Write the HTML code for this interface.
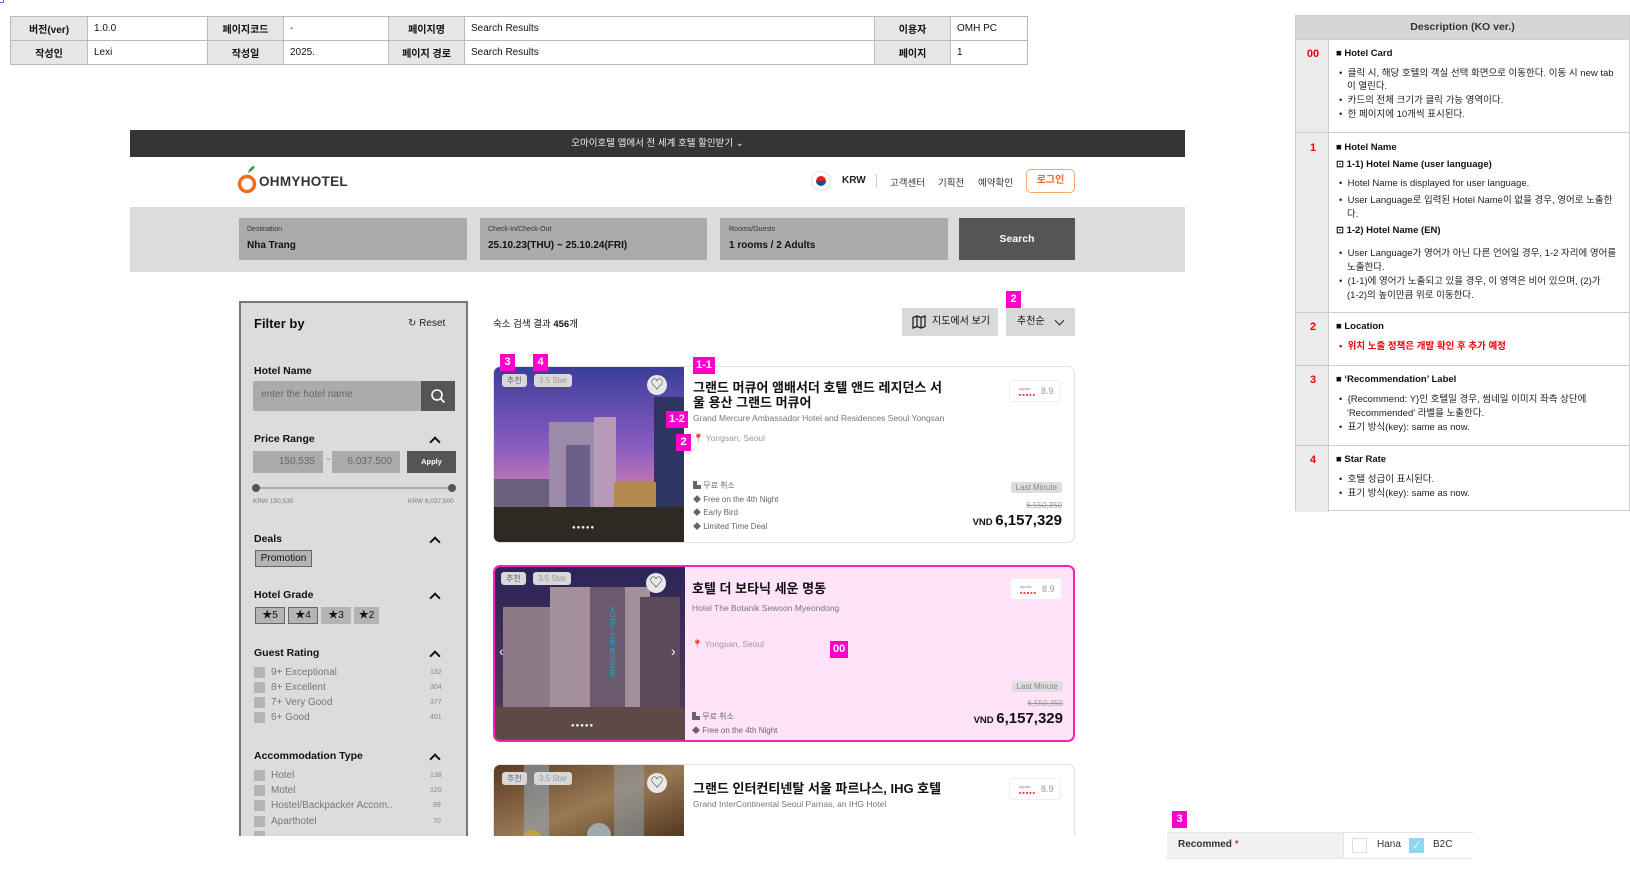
<!DOCTYPE html>
<html><head><meta charset="utf-8">
<style>
*{margin:0;padding:0;box-sizing:border-box}
body{width:1630px;height:873px;overflow:hidden;background:#fff;font-family:"Liberation Sans","Noto Sans CJK KR",sans-serif;color:#111;position:relative}
.a{position:absolute;white-space:nowrap}
.tg{position:absolute;background:#f0c;color:#fff;font-weight:bold;font-size:11px;line-height:17px;text-align:center;padding:0 3px;min-width:15px}
table.meta{position:absolute;left:10px;top:16px;border-collapse:collapse;font-size:10px}
table.meta td{border:1px solid #bbb;height:24px;padding:0 6px}
table.meta td.h{background:#e6e6e6;font-weight:bold;text-align:center}
.sb{position:absolute;left:239px;top:301px;width:229px;height:535px;background:#dcdcdc;border:2px solid #777;border-bottom:none;overflow:hidden}
.sb .a{font-size:10px}
.lab{font-weight:bold;font-size:10.5px!important;color:#111}
.chev{position:absolute;width:8px;height:8px;border-left:2px solid #111;border-top:2px solid #111;transform:rotate(45deg)}
.cb{position:absolute;width:11px;height:11px;background:#b4b4b4}
.it{color:#777;font-size:10px!important}
.ct{color:#888;font-size:7px!important}
.card{position:absolute;left:493px;width:582px;border:1px solid #e2e2e2;border-radius:7px;background:#fff;overflow:hidden}
.img{position:absolute;left:0;top:0;width:190px;bottom:0}
.pill{position:absolute;font-size:8px;line-height:13px;padding:0 5px;border-radius:3px}
.heart{position:absolute;width:20px;height:20px;border-radius:50%;background:#e8e8e8;text-align:center;font-size:13px;line-height:20px;color:#333}
.ag{position:absolute;right:13px;top:13px;width:52px;height:22px;border:1px solid #eee;border-radius:3px;background:#fff}
.desc{position:absolute;left:1295px;top:15px;width:335px;height:496px;border:1px solid #ccc;font-size:9.5px}
.dr{position:absolute;left:0;width:335px;border-top:1px solid #ccc}
.num{position:absolute;left:0;width:34px;text-align:center;color:#e00;font-weight:bold;font-size:11px}
.dt{position:absolute;left:43px;white-space:nowrap;color:#222}
.c2{left:51px}
.bh{font-weight:bold;color:#111}
</style></head><body>

<div class="a" style="left:0;top:0;width:4px;height:3px;border:1px solid #3a7bd5;border-top:none;border-left:none"></div>

<table class="meta">
<tr><td class="h" style="width:77px">버전(ver)</td><td style="width:120px">1.0.0</td><td class="h" style="width:76px">페이지코드</td><td style="width:105px">-</td><td class="h" style="width:76px">페이지명</td><td style="width:410px">Search Results</td><td class="h" style="width:76px">이용자</td><td style="width:77px">OMH PC</td></tr>
<tr><td class="h">작성인</td><td>Lexi</td><td class="h">작성일</td><td>2025.</td><td class="h">페이지 경로</td><td>Search Results</td><td class="h">페이지</td><td>1</td></tr>
</table>

<div class="a" style="left:130px;top:130px;width:1055px;height:27px;background:#353535;color:#eee;font-size:9.5px;text-align:center;line-height:27px">오마이호텔 앱에서 전 세계 호텔 할인받기 ⌄</div>

<svg class="a" style="left:236px;top:165px" width="24" height="30" viewBox="0 0 24 30"><path d="M12 8 C13 3 16 1 19 1 C18 4 16 6 12 8Z" fill="#3aa047"/><circle cx="11" cy="19" r="7.5" fill="none" stroke="#f26b21" stroke-width="3.5"/></svg>
<div class="a" style="left:259px;top:174px;font-size:13.5px;font-weight:bold;letter-spacing:0.3px;color:#333">OHMYHOTEL</div>
<div class="a" style="left:812px;top:172px;width:18px;height:18px;border-radius:50%;background:#fff;box-shadow:0 0 2px #aaa"></div>
<div class="a" style="left:816px;top:176px;width:10px;height:10px;border-radius:50%;background:linear-gradient(#d22 50%,#1a4aa0 50%)"></div>
<div class="a" style="left:842px;top:175px;font-size:10px;font-weight:bold;color:#222">KRW</div>
<div class="a" style="left:876px;top:174px;width:1px;height:13px;background:#ccc"></div>
<div class="a" style="left:890px;top:175px;font-size:9.5px;color:#333">고객센터</div>
<div class="a" style="left:938px;top:175px;font-size:9.5px;color:#333">기획전</div>
<div class="a" style="left:978px;top:175px;font-size:9.5px;color:#333">예약확인</div>
<div class="a" style="left:1026px;top:169px;width:49px;height:24px;border:1.5px solid #f7a66f;border-radius:5px;color:#f26b21;font-size:10px;font-weight:bold;text-align:center;line-height:21px">로그인</div>

<div class="a" style="left:130px;top:207px;width:1055px;height:65px;background:#dcdcdc"></div>
<div class="a" style="left:239px;top:218px;width:228px;height:42px;background:#ababab"></div>
<div class="a" style="left:480px;top:218px;width:227px;height:42px;background:#ababab"></div>
<div class="a" style="left:720px;top:218px;width:228px;height:42px;background:#ababab"></div>
<div class="a" style="left:959px;top:218px;width:116px;height:42px;background:#555;color:#fff;font-size:10.5px;font-weight:bold;text-align:center;line-height:42px">Search</div>
<div class="a" style="left:247px;top:226px;font-size:7px;color:#333">Destination</div>
<div class="a" style="left:247px;top:240px;font-size:10px;font-weight:bold">Nha Trang</div>
<div class="a" style="left:488px;top:226px;font-size:7px;color:#333">Check-In/Check-Out</div>
<div class="a" style="left:488px;top:240px;font-size:10px;font-weight:bold">25.10.23(THU) ~ 25.10.24(FRI)</div>
<div class="a" style="left:729px;top:226px;font-size:7px;color:#333">Rooms/Guests</div>
<div class="a" style="left:729px;top:240px;font-size:10px;font-weight:bold">1 rooms / 2 Adults</div>

<div class="sb">
<div class="a" style="left:13px;top:13px;font-size:13px;font-weight:bold">Filter by</div>
<div class="a" style="left:167px;top:15px;font-size:10px;color:#222">↻ Reset</div>
<div class="a lab" style="left:13px;top:62px">Hotel Name</div>
<div class="a" style="left:12px;top:78px;width:168px;height:30px;background:#ababab"></div>
<div class="a" style="left:20px;top:86px;color:#666">enter the hotel name</div>
<div class="a" style="left:180px;top:78px;width:34px;height:30px;background:#555"></div>
<svg class="a" style="left:189px;top:85px" width="16" height="16" viewBox="0 0 16 16"><circle cx="7" cy="7" r="5" fill="none" stroke="#fff" stroke-width="1.6"/><path d="M11 11l3.5 3.5" stroke="#fff" stroke-width="1.6"/></svg>
<div class="a lab" style="left:13px;top:130px">Price Range</div>
<div class="chev" style="left:190px;top:135px"></div>
<div class="a" style="left:12px;top:148px;width:70px;height:22px;background:#ababab;color:#666;text-align:right;padding-right:8px;line-height:22px">150,535</div>
<div class="a" style="left:85px;top:152px;color:#666;font-size:8px">~</div>
<div class="a" style="left:91px;top:148px;width:68px;height:22px;background:#ababab;color:#666;text-align:right;padding-right:8px;line-height:22px">6,037,500</div>
<div class="a" style="left:166px;top:148px;width:49px;height:22px;background:#555;color:#fff;font-size:7.5px;font-weight:bold;text-align:center;line-height:22px">Apply</div>
<div class="a" style="left:15px;top:184px;width:197px;height:2px;background:#aaa"></div>
<div class="a" style="left:11px;top:181px;width:8px;height:8px;border-radius:50%;background:#555"></div>
<div class="a" style="left:207px;top:181px;width:8px;height:8px;border-radius:50%;background:#555"></div>
<div class="a" style="left:12px;top:195px;font-size:6.5px!important;color:#777">KRW 150,535</div>
<div class="a" style="left:167px;top:195px;font-size:6.5px!important;color:#777">KRW 6,037,500</div>
<div class="a lab" style="left:13px;top:230px">Deals</div>
<div class="chev" style="left:190px;top:235px"></div>
<div class="a" style="left:14px;top:247px;width:57px;height:17px;background:#b4b4b4;border:1px solid #666;font-size:10px;text-align:center;line-height:15px">Promotion</div>
<div class="a lab" style="left:13px;top:286px">Hotel Grade</div>
<div class="chev" style="left:190px;top:291px"></div>
<div class="a" style="left:14px;top:304px;width:30px;height:17px;background:#b4b4b4;border:1px solid #666;font-size:10px;text-align:center;line-height:15px">★5</div>
<div class="a" style="left:47px;top:304px;width:30px;height:17px;background:#b4b4b4;border:1px solid #666;font-size:10px;text-align:center;line-height:15px">★4</div>
<div class="a" style="left:80px;top:304px;width:30px;height:17px;background:#b4b4b4;font-size:10px;text-align:center;line-height:17px">★3</div>
<div class="a" style="left:113px;top:304px;width:25px;height:17px;background:#b4b4b4;font-size:10px;text-align:center;line-height:17px">★2</div>
<div class="a lab" style="left:13px;top:344px">Guest Rating</div>
<div class="chev" style="left:190px;top:349px"></div>
<div class="cb" style="left:13px;top:364px"></div><div class="a it" style="left:30px;top:364px">9+ Exceptional</div><div class="a ct" style="left:189px;top:366px">132</div>
<div class="cb" style="left:13px;top:379px"></div><div class="a it" style="left:30px;top:379px">8+ Excellent</div><div class="a ct" style="left:189px;top:381px">304</div>
<div class="cb" style="left:13px;top:394px"></div><div class="a it" style="left:30px;top:394px">7+ Very Good</div><div class="a ct" style="left:189px;top:396px">377</div>
<div class="cb" style="left:13px;top:409px"></div><div class="a it" style="left:30px;top:409px">6+ Good</div><div class="a ct" style="left:189px;top:411px">401</div>
<div class="a lab" style="left:13px;top:447px">Accommodation Type</div>
<div class="chev" style="left:190px;top:452px"></div>
<div class="cb" style="left:13px;top:467px"></div><div class="a it" style="left:30px;top:467px">Hotel</div><div class="a ct" style="left:189px;top:469px">138</div>
<div class="cb" style="left:13px;top:482px"></div><div class="a it" style="left:30px;top:482px">Motel</div><div class="a ct" style="left:189px;top:484px">120</div>
<div class="cb" style="left:13px;top:497px"></div><div class="a it" style="left:30px;top:497px">Hostel/Backpacker Accom..</div><div class="a ct" style="left:192px;top:499px">89</div>
<div class="cb" style="left:13px;top:513px"></div><div class="a it" style="left:30px;top:513px">Aparthotel</div><div class="a ct" style="left:192px;top:515px">70</div>
<div class="cb" style="left:13px;top:528px"></div>
</div>

<div class="a" style="left:493px;top:316px;font-size:9.5px">숙소 검색 결과 <b>456</b>개</div>
<div class="a" style="left:902px;top:308px;width:96px;height:28px;background:#d9d9d9;font-size:10px;line-height:28px;padding-left:30px">지도에서 보기</div>
<svg class="a" style="left:912px;top:315px" width="14" height="14" viewBox="0 0 14 14"><path d="M1 2.5l4-1.5 4 1.5 4-1.5v10.5l-4 1.5-4-1.5-4 1.5z M5 1v10.5 M9 2.5v10.5" fill="none" stroke="#222" stroke-width="1.3"/></svg>
<div class="a" style="left:1006px;top:308px;width:69px;height:28px;background:#d9d9d9;font-size:10px;line-height:28px;padding-left:11px">추천순</div>
<div class="a" style="left:1056px;top:317px;width:7px;height:7px;border-right:1.5px solid #222;border-bottom:1.5px solid #222;transform:rotate(45deg)"></div>
<div class="tg" style="left:1006px;top:291px">2</div>

<div class="card" style="top:366px;height:177px">
<svg class="img" width="190" height="177" viewBox="0 0 190 177" preserveAspectRatio="none">
<defs><linearGradient id="s1" x1="0" y1="0" x2="0" y2="1"><stop offset="0" stop-color="#3a3d9a"/><stop offset=".45" stop-color="#8a5cc0"/><stop offset=".7" stop-color="#c77ab5"/><stop offset="1" stop-color="#3b2d3a"/></linearGradient></defs>
<rect width="190" height="177" fill="url(#s1)"/>
<rect x="55" y="55" width="65" height="85" fill="#9b8aa8"/><rect x="72" y="78" width="24" height="62" fill="#6d5f8c"/>
<rect x="100" y="50" width="22" height="90" fill="#b79ab8"/>
<rect x="160" y="30" width="30" height="120" fill="#2d3560"/>
<rect x="120" y="115" width="42" height="30" fill="#b58a50"/>
<rect x="0" y="112" width="55" height="30" fill="#6a6080"/>
<rect x="0" y="140" width="190" height="37" fill="#2e2a22"/>
</svg>
<div class="pill" style="left:8px;top:7px;background:#d8d8d8;color:#666">추천</div>
<div class="pill" style="left:40px;top:7px;background:#d8d8d8;color:#999">3.5 Star</div>
<div class="heart" style="left:153px;top:8px">♡</div>
<div class="a" style="left:78px;top:158px;color:#fff;font-size:6px;letter-spacing:1px">●●●●●</div>
<div class="a" style="left:199px;top:13px;font-size:13px;font-weight:bold;line-height:15px;white-space:normal;word-break:break-all;width:252px">그랜드 머큐어 앰배서더 호텔 앤드 레지던스 서울 용산 그랜드 머큐어</div>
<div class="a" style="left:199px;top:46px;font-size:8.5px;color:#777">Grand Mercure Ambassador Hotel and Residences Seoul Yongsan</div>
<div class="a" style="left:199px;top:66px;font-size:8.5px;color:#999"><span style="color:#aaa">📍</span> Yongsan, Seoul</div>
<div class="a" style="left:199px;top:112px;font-size:8px;color:#666;line-height:13.5px">▙ 무료 취소<br>◆ Free on the 4th Night<br>◆ Early Bird<br>◆ Limited Time Deal</div>
<div class="ag"><div class="a" style="left:9px;top:5px;font-size:4px;color:#888">agoda</div><div class="a" style="left:9px;top:11px;font-size:4px;color:#e44;letter-spacing:1px">■■■■■</div><div class="a" style="left:31px;top:5px;font-size:9px;color:#999">8.9</div></div>
<div class="a" style="right:12px;top:115px;background:#dedede;color:#888;font-size:8px;padding:1px 5px;border-radius:2px">Last Minute</div>
<div class="a" style="right:12px;top:134px;font-size:8px;color:#999;text-decoration:line-through">6,550,350</div>
<div class="a" style="right:12px;top:145px;font-size:15px;font-weight:bold"><span style="font-size:9.5px">VND </span>6,157,329</div>
</div>
<div class="tg" style="left:500px;top:354px">3</div>
<div class="tg" style="left:533px;top:354px">4</div>
<div class="tg" style="left:693px;top:357px">1-1</div>
<div class="tg" style="left:666px;top:411px">1-2</div>
<div class="tg" style="left:676px;top:434px">2</div>

<div class="card" style="top:565px;height:177px;background:#ffe3f8;border:2px solid #ff1fb9">
<svg class="img" width="190" height="177" viewBox="0 0 190 177" preserveAspectRatio="none">
<defs><linearGradient id="s2" x1="0" y1="0" x2="0" y2="1"><stop offset="0" stop-color="#2c2458"/><stop offset="1" stop-color="#5a3d5a"/></linearGradient></defs>
<rect width="190" height="177" fill="url(#s2)"/>
<rect x="8" y="40" width="55" height="137" fill="#8e7a86"/>
<rect x="55" y="20" width="100" height="157" fill="#a3909a"/>
<rect x="95" y="20" width="35" height="157" fill="#6b5a6e"/>
<rect x="145" y="30" width="40" height="147" fill="#5a4a5a"/>
<text x="115" y="40" fill="#2ac" font-size="7" transform="rotate(90 115 40)">HOTEL THE BOTANIK</text>
<rect x="0" y="140" width="190" height="37" fill="#5d4a46"/>
</svg>
<div class="pill" style="left:6px;top:5px;background:#d8d8d8;color:#666">추천</div>
<div class="pill" style="left:38px;top:5px;background:#d8d8d8;color:#999">3.5 Star</div>
<div class="heart" style="left:151px;top:6px">♡</div>
<div class="a" style="left:4px;top:76px;color:#fff;font-size:14px">‹</div>
<div class="a" style="left:176px;top:76px;color:#fff;font-size:14px">›</div>
<div class="a" style="left:76px;top:156px;color:#fff;font-size:6px;letter-spacing:1px">●●●●●</div>
<div class="a" style="left:197px;top:11px;font-size:13px;font-weight:bold">호텔 더 보타닉 세운 명동</div>
<div class="a" style="left:197px;top:36px;font-size:8.5px;color:#777">Hotel The Botanik Sewoon Myeondong</div>
<div class="a" style="left:197px;top:72px;font-size:8.5px;color:#999"><span style="color:#aaa">📍</span> Yongsan, Seoul</div>
<div class="a" style="left:197px;top:143px;font-size:8px;color:#666;line-height:13.5px">▙ 무료 취소<br>◆ Free on the 4th Night</div>
<div class="ag" style="right:11px;top:11px"><div class="a" style="left:9px;top:5px;font-size:4px;color:#888">agoda</div><div class="a" style="left:9px;top:11px;font-size:4px;color:#e44;letter-spacing:1px">■■■■■</div><div class="a" style="left:31px;top:5px;font-size:9px;color:#999">8.9</div></div>
<div class="a" style="right:10px;top:114px;background:#dedede;color:#888;font-size:8px;padding:1px 5px;border-radius:2px">Last Minute</div>
<div class="a" style="right:10px;top:132px;font-size:8px;color:#999;text-decoration:line-through">6,550,350</div>
<div class="a" style="right:10px;top:143px;font-size:15px;font-weight:bold"><span style="font-size:9.5px">VND </span>6,157,329</div>
</div>
<div class="tg" style="left:830px;top:641px">00</div>

<div class="card" style="top:764px;height:80px;border-bottom:none;border-radius:7px 7px 0 0">
<svg class="img" width="190" height="80" viewBox="0 0 190 80" preserveAspectRatio="none">
<defs><linearGradient id="s3" x1="0" y1="0" x2="1" y2="1"><stop offset="0" stop-color="#5a3a20"/><stop offset=".5" stop-color="#9a7a55"/><stop offset="1" stop-color="#4a3018"/></linearGradient></defs>
<rect width="190" height="80" fill="url(#s3)"/>
<rect x="30" y="0" width="25" height="80" fill="#8fa3b5" opacity=".6"/><rect x="120" y="0" width="30" height="80" fill="#8fa3b5" opacity=".5"/>
<circle cx="38" cy="75" r="10" fill="#c8a040"/><circle cx="105" cy="70" r="12" fill="#a0a8b0"/>
</svg>
<div class="pill" style="left:8px;top:7px;background:#d8d8d8;color:#666">추천</div>
<div class="pill" style="left:40px;top:7px;background:#d8d8d8;color:#999">3.5 Star</div>
<div class="heart" style="left:153px;top:8px">♡</div>
<div class="a" style="left:199px;top:13px;font-size:13px;font-weight:bold">그랜드 인터컨티넨탈 서울 파르나스, IHG 호텔</div>
<div class="a" style="left:199px;top:34px;font-size:8.5px;color:#777">Grand InterContinental Seoul Parnas, an IHG Hotel</div>
<div class="ag"><div class="a" style="left:9px;top:5px;font-size:4px;color:#888">agoda</div><div class="a" style="left:9px;top:11px;font-size:4px;color:#e44;letter-spacing:1px">■■■■■</div><div class="a" style="left:31px;top:5px;font-size:9px;color:#999">8.9</div></div>
</div>
<div class="a" style="left:480px;top:836px;width:620px;height:37px;background:#fff"></div>

<div class="desc">
<div class="a" style="left:0;top:0;width:333px;height:23px;background:#d6d6d6;font-weight:bold;font-size:10.5px;text-align:center;line-height:23px;color:#333">Description (KO ver.)</div>
<div class="a" style="left:0;top:23px;width:33px;height:473px;background:#ececec;border-right:1px solid #ccc"></div>
<div class="dr" style="top:23px"></div>
<div class="dr" style="top:116px"></div>
<div class="dr" style="top:296px"></div>
<div class="dr" style="top:349px"></div>
<div class="dr" style="top:429px"></div>
<div class="num" style="top:32px">00</div>
<div class="dt bh" style="left:40px;top:32px">■ Hotel Card</div>
<div class="dt" style="top:49px">•&nbsp; 클릭 시, 해당 호텔의 객실 선택 화면으로 이동한다. 이동 시 new tab</div>
<div class="dt c2" style="top:62px">이 열린다.</div>
<div class="dt" style="top:76px">•&nbsp; 카드의 전체 크기가 클릭 가능 영역이다.</div>
<div class="dt" style="top:90px">•&nbsp; 한 페이지에 10개씩 표시된다.</div>
<div class="num" style="top:126px">1</div>
<div class="dt bh" style="left:40px;top:126px">■ Hotel Name</div>
<div class="dt bh" style="left:40px;top:143px">⊡ 1-1) Hotel Name (user language)</div>
<div class="dt" style="top:162px">•&nbsp; Hotel Name is displayed for user language.</div>
<div class="dt" style="top:176px">•&nbsp; User Language로 입력된 Hotel Name이 없을 경우, 영어로 노출한</div>
<div class="dt c2" style="top:190px">다.</div>
<div class="dt bh" style="left:40px;top:209px">⊡ 1-2) Hotel Name (EN)</div>
<div class="dt" style="top:229px">•&nbsp; User Language가 영어가 아닌 다른 언어일 경우, 1-2 자리에 영어를</div>
<div class="dt c2" style="top:243px">노출한다.</div>
<div class="dt" style="top:257px">•&nbsp; (1-1)에 영어가 노출되고 있을 경우, 이 영역은 비어 있으며, (2)가</div>
<div class="dt c2" style="top:271px">(1-2)의 높이만큼 위로 이동한다.</div>
<div class="num" style="top:305px">2</div>
<div class="dt bh" style="left:40px;top:305px">■ Location</div>
<div class="dt" style="top:322px;color:#e00;font-weight:bold">•&nbsp; 위치 노출 정책은 개발 확인 후 추가 예정</div>
<div class="num" style="top:358px">3</div>
<div class="dt bh" style="left:40px;top:358px">■ ‘Recommendation’ Label</div>
<div class="dt" style="top:375px">•&nbsp; {Recommend: Y}인 호텔일 경우, 썸네일 이미지 좌측 상단에</div>
<div class="dt c2" style="top:389px">'Recommended' 라벨을 노출한다.</div>
<div class="dt" style="top:403px">•&nbsp; 표기 방식(key): same as now.</div>
<div class="num" style="top:438px">4</div>
<div class="dt bh" style="left:40px;top:438px">■ Star Rate</div>
<div class="dt" style="top:455px">•&nbsp; 호텔 성급이 표시된다.</div>
<div class="dt" style="top:469px">•&nbsp; 표기 방식(key): same as now.</div>
</div>

<div class="tg" style="left:1172px;top:811px">3</div>
<div class="a" style="left:1167px;top:832px;width:306px;height:27px;border-top:1px solid #e5e5e5;border-bottom:1px solid #e5e5e5"></div>
<div class="a" style="left:1167px;top:833px;width:177px;height:25px;background:#f1f1f1;border-right:1px solid #e2e2e2"></div>
<div class="a" style="left:1178px;top:839px;font-size:10px;font-weight:bold;color:#333">Recommed <span style="color:#e33">*</span></div>
<div class="a" style="left:1352px;top:838px;width:15px;height:15px;border:1px solid #ddd;background:#fff"></div>
<div class="a" style="left:1377px;top:839px;font-size:10px;color:#333">Hana</div>
<div class="a" style="left:1409px;top:838px;width:15px;height:15px;background:#8fd6ee;color:#fff;font-size:9px;text-align:center;line-height:15px">✓</div>
<div class="a" style="left:1433px;top:839px;font-size:10px;color:#333">B2C</div>

</body></html>
